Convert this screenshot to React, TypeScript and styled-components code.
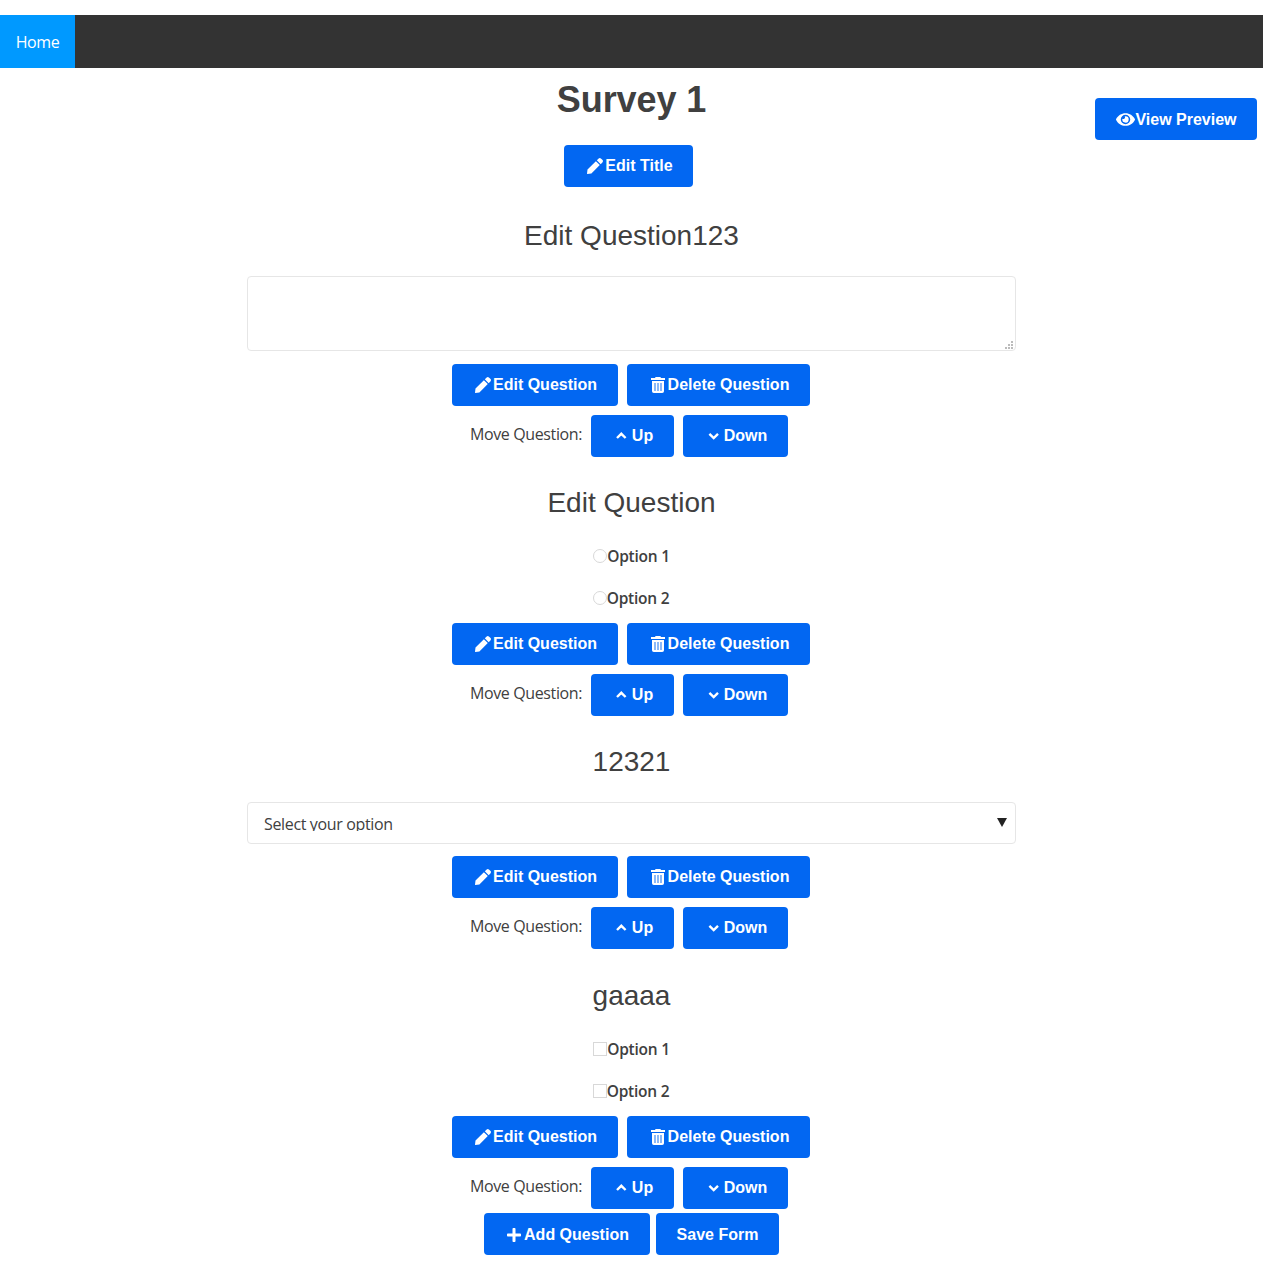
import React from "react";
import styled, { createGlobalStyle } from "styled-components";
import { FaEye, FaPlus } from "react-icons/fa";

const sans = `"Liberation Sans", Arial, sans-serif`;
const humanist = `"Open Sans", "Noto Sans", sans-serif`;

const Global = createGlobalStyle`
  * { box-sizing: border-box; }
  body { margin: 0; background: #fff; color: #404040; font: 16px/24px ${humanist}; }
`;
const Page = styled.div`height: 1263px; padding-top: 15px; overflow: hidden; display: flex; flex-direction: column;`;
const Nav = styled.nav`height: 53px; flex: none; background: #333; display: flex;`;
const NavLink = styled.a`
  width: 75px; background: #0099ff; color: #fff; display: flex; align-items: center; justify-content: center;
`;
const NavText = styled.span`letter-spacing: -0.4px;`;
const Header = styled.header`
  height: 120px; flex: none; display: grid; grid-template-columns: 1fr auto 1fr; align-items: start;
`;
const TitleGroup = styled.div`grid-column: 2; display: flex; flex-direction: column; align-items: center;`;
const Title = styled.h1`margin: 9px 0 22px; font: bold 36px/46px ${sans}; letter-spacing: -0.1px; white-space: nowrap;`;
const PreviewSlot = styled.div`display: flex; justify-content: flex-end; padding: 30px 6px 0 0;`;
const TitleSlot = styled.div`padding-right: 6px;`;
const Button = styled.button<{ $w: number; $drop?: boolean; $gap?: number; $indent?: number }>`
  width: ${p => p.$w}px; height: 42px; flex: none; border: 0; border-radius: 4px;
  padding: ${p => (p.$drop ? "2px" : "0")} 0 0 ${p => p.$indent ?? 0}px;
  background: #0267f2; color: #fff; font: bold 16px/24px ${sans}; white-space: nowrap;
  display: flex; align-items: center; justify-content: center; gap: ${p => p.$gap ?? 0}px;
  svg { flex: none; display: block; }
`;
const PreviewIcon = styled(FaEye)`margin-bottom: 2px;`;
const Form = styled.main`width: 769px; margin-left: 247px; display: flex; flex-direction: column;`;
const Question = styled.section<{ $h: number }>`
  height: ${p => p.$h}px; flex: none; display: flex; flex-direction: column; align-items: center;
  > * { flex-shrink: 0; }
`;
const Heading = styled.h2<{ $h?: number }>`margin: 27px 0 0; height: ${p => p.$h ?? 61}px; font: 28px/42px ${sans}; white-space: nowrap;`;
const Answer = styled.div<{ $h: number }>`height: ${p => p.$h}px; width: 100%;`;
const TextBox = styled.div`
  height: 75px; border: 1px solid #e6e6e6; border-radius: 4px; display: flex; align-items: flex-end; justify-content: flex-end; padding: 0 1px 0 0;
`;
const SelectBox = styled.div`
  height: 42px; border: 1px solid #e6e6e6; border-radius: 4px; display: flex; align-items: flex-start; justify-content: space-between; padding: 9px 8px 0 16px;
`;
const SelectText = styled.span`height: 19px; overflow: hidden; letter-spacing: -0.35px;`;
const Arrow = styled.svg`margin-top: 6px;`;
const Option = styled.label<{ $shift?: number }>`
  height: 42px; display: flex; align-items: center; justify-content: center; font-weight: 600; font-size: 15.5px;
  letter-spacing: -0.25px; padding-right: ${p => p.$shift ?? 0}px;
`;
const Mark = styled.span<{ $round?: boolean }>`
  width: 14px; height: 14px; margin-bottom: 1px; border: 1px solid #d8d8d8; border-radius: ${p => (p.$round ? "50%" : "0")};
`;
const Actions = styled.div`display: flex; gap: 9px; padding-right: 1px;`;
const Mover = styled.div`display: flex; margin-top: 9px; gap: 9px; padding-right: 5px;`;
const MoveLabel = styled.span`padding-top: 7px; width: 112px; white-space: nowrap; letter-spacing: -0.38px;`;
const Footer = styled.footer`display: flex; justify-content: center; gap: 6px; margin-top: 4px; padding-right: 1px;`;

const Pencil = () => (
  <svg width="18" height="18" viewBox="0 0 18 18" fill="#fff">
    <path d="M1 16.8 1.5 12.6 9.9 4.2 13.8 8.1 5.4 16.5 1.3 17ZM10.8 3.3 12.7 1.4Q13.8.5 14.9 1.4L16.6 3.1Q17.5 4.2 16.6 5.3L14.7 7.2Z" />
  </svg>
);
const Trash = () => (
  <svg width="16" height="18" viewBox="0 0 16 18">
    <path fill="#fff" d="M5.3 1h5.4v1H15v2H1V2h4.3ZM2 5h12v10.2q0 1.8-1.8 1.8H3.8Q2 17 2 15.2Z" />
    <path stroke="#0267f2" opacity=".5" d="M5 7v8M8 7v8M11 7v8" strokeWidth="1.8" />
  </svg>
);
const Chevron = ({ down }: { down?: boolean }) => (
  <svg width="20" height="18" viewBox="0 0 20 18" fill="none" stroke="#fff" strokeWidth="2.4">
    <path d={down ? "M5.4 6.8 9.7 11 14 6.8" : "M5 11 9.3 6.8 13.6 11"} />
  </svg>
);

function Controls() {
  return (
    <>
      <Actions>
        <Button $w={166} $gap={1} $indent={1}><Pencil />Edit Question</Button>
        <Button $w={183} $gap={2} $indent={2}><Trash />Delete Question</Button>
      </Actions>
      <Mover>
        <MoveLabel>Move Question:</MoveLabel>
        <Button $w={83}><Chevron />Up</Button>
        <Button $w={105}><Chevron down />Down</Button>
      </Mover>
    </>
  );
}

function Options({ round }: { round?: boolean }) {
  return (
    <>
      <Option><Mark $round={round} />Option 1</Option>
      <Option $shift={1}><Mark $round={round} />Option 2</Option>
    </>
  );
}

export default function App() {
  return (
    <Page>
      <Global />
      <Nav><NavLink><NavText>Home</NavText></NavLink></Nav>
      <Header>
        <TitleGroup>
          <Title>Survey 1</Title>
          <TitleSlot><Button $w={129} $gap={1} $indent={2}><Pencil />Edit Title</Button></TitleSlot>
        </TitleGroup>
        <PreviewSlot><Button $w={162} $drop $indent={1}><PreviewIcon size={19} />View Preview</Button></PreviewSlot>
      </Header>
      <Form>
        <Question $h={267}>
          <Heading>Edit Question123</Heading>
          <Answer $h={88}>
            <TextBox>
              <svg width="9" height="9" viewBox="0 0 9 9" fill="#bbb"><path d="M6 0h2v2H6zM3 3h2v2H3zM6 3h2v2H6zM0 6h2v2H0zM3 6h2v2H3zM6 6h2v2H6z" /></svg>
            </TextBox>
          </Answer>
          <Controls />
        </Question>
        <Question $h={259}>
          <Heading $h={53}>Edit Question</Heading>
          <Answer $h={88}><Options round /></Answer>
          <Controls />
        </Question>
        <Question $h={234}>
          <Heading>12321</Heading>
          <Answer $h={54}>
            <SelectBox>
              <SelectText>Select your option</SelectText>
              <Arrow width="10" height="9" viewBox="0 0 10 9"><path fill="#222" d="M0 0h10L5 9Z" /></Arrow>
            </SelectBox>
          </Answer>
          <Controls />
        </Question>
        <Question $h={261}>
          <Heading $h={53}>gaaaa</Heading>
          <Answer $h={88}><Options /></Answer>
          <Controls />
        </Question>
        <Footer>
          <Button $w={166} $drop $gap={2} $indent={2}><FaPlus size={16} />Add Question</Button>
          <Button $w={123} $drop $indent={1}>Save Form</Button>
        </Footer>
      </Form>
    </Page>
  );
}
